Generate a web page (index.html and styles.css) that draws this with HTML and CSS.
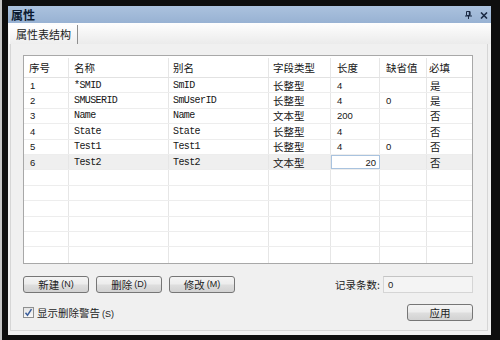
FILE: index.html
```html
<!DOCTYPE html>
<html>
<head>
<meta charset="utf-8">
<link rel="stylesheet" href="styles.css">
</head>
<body>
<div class="frame">
  <div class="win">
    <div class="titlebar">
      <span class="title">属性</span>
      <span class="tbtns">
        <svg class="pin" width="7" height="8" viewBox="0 0 7 8"><path d="M1.5 0.5h3.5v4h-3.5z" fill="none" stroke="#1b2a44"/><path d="M4.5 0.5v4" stroke="#1b2a44" stroke-width="1.4"/><path d="M0 5h7" stroke="#1b2a44"/><path d="M3.5 5v3" stroke="#1b2a44"/></svg>
        <svg class="close" width="8" height="7" viewBox="0 0 8 7"><path d="M1 0.5l6 6M7 0.5l-6 6" stroke="#1b2a44" stroke-width="1.6"/></svg>
      </span>
    </div>
    <div class="tabstrip"><div class="tab">属性表结构</div></div>
    <div class="panel">
      <div class="grid">
        <div class="row head"><span>序号</span><span>名称</span><span>别名</span><span>字段类型</span><span>长度</span><span>缺省值</span><span>必填</span></div>
        <div class="row"><span class="num">1</span><span class="mono">*SMID</span><span class="mono">SmID</span><span>长整型</span><span class="num">4</span><span class="num"></span><span>是</span></div>
        <div class="row"><span class="num">2</span><span class="mono">SMUSERID</span><span class="mono">SmUserID</span><span>长整型</span><span class="num">4</span><span class="num">0</span><span>是</span></div>
        <div class="row"><span class="num">3</span><span class="mono">Name</span><span class="mono">Name</span><span>文本型</span><span class="num">200</span><span class="num"></span><span>否</span></div>
        <div class="row"><span class="num">4</span><span class="mono">State</span><span class="mono">State</span><span>长整型</span><span class="num">4</span><span class="num"></span><span>否</span></div>
        <div class="row"><span class="num">5</span><span class="mono">Test1</span><span class="mono">Test1</span><span>长整型</span><span class="num">4</span><span class="num">0</span><span>否</span></div>
        <div class="row sel"><span class="num">6</span><span class="mono">Test2</span><span class="mono">Test2</span><span>文本型</span><span class="num edit">20</span><span class="num"></span><span>否</span></div>
        <div class="row"><span></span><span></span><span></span><span></span><span></span><span></span><span></span></div>
        <div class="row"><span></span><span></span><span></span><span></span><span></span><span></span><span></span></div>
        <div class="row"><span></span><span></span><span></span><span></span><span></span><span></span><span></span></div>
        <div class="row"><span></span><span></span><span></span><span></span><span></span><span></span><span></span></div>
        <div class="row"><span></span><span></span><span></span><span></span><span></span><span></span><span></span></div>
        <div class="row last"><span></span><span></span><span></span><span></span><span></span><span></span><span></span></div>
      </div>
      <div class="actions">
        <button class="btn">新建<span class="acc">(N)</span></button>
        <button class="btn">删除<span class="acc">(D)</span></button>
        <button class="btn">修改<span class="acc">(M)</span></button>
        <div class="count">
          <span class="count-label">记录条数:</span>
          <span class="count-box">0</span>
        </div>
      </div>
      <div class="footer">
        <label class="check">
          <span class="box"><svg width="9" height="9" viewBox="0 0 9 9"><path d="M1.5 4.8l2 2.4l4-6" fill="none" stroke="#3c5f9c" stroke-width="1.5"/></svg></span>
          <span class="check-text">显示删除警告<span class="acc">(S)</span></span>
        </label>
        <button class="btn apply">应用</button>
      </div>
    </div>
  </div>
</div>
</body>
</html>
```
FILE: styles.css
```css
html, body {
  margin: 0;
  padding: 0;
}
body {
  width: 500px;
  height: 340px;
  overflow: hidden;
  font-family: "Noto Sans CJK SC", "Liberation Sans", sans-serif;
  color: #1c1c1c;
}
.frame {
  box-sizing: border-box;
  width: 500px;
  height: 340px;
  background: #0e0e0e;
  border-left: 2px solid #c4c4c4;
  padding: 6px 9px 5px 6px;
}
.win {
  height: 329px;
  background: #f0f0f0;
  display: flex;
  flex-direction: column;
}
.titlebar {
  height: 17px;
  flex: none;
  background: linear-gradient(#abc2de, #98b2d3);
  display: flex;
  align-items: center;
  padding: 0 3px 0 3px;
}
.title {
  font-weight: bold;
  font-size: 12px;
  line-height: 17px;
  color: #0c1a30;
}
.tbtns {
  margin-left: auto;
  display: flex;
  align-items: center;
  gap: 8px;
  padding-top: 1px;
}
.tbtns svg {
  display: block;
}
.tabstrip {
  height: 21px;
  flex: none;
  background: linear-gradient(#fefefe, #ebebeb);
  display: flex;
  align-items: flex-end;
}
.tab {
  box-sizing: border-box;
  height: 19px;
  width: 69px;
  margin-left: 1px;
  border-left: 1px solid #ffffff;
  border-right: 1px solid #8e8e8e;
  background: linear-gradient(#ffffff, #eeeeee);
  font-size: 11px;
  line-height: 19px;
  padding-left: 6px;
  color: #1a1a1a;
}
.panel {
  flex: 1;
  margin: 0 3px 4px 2px;
  border: 1px solid #d6d6d6;
  border-top: none;
  padding: 11px 14px 0 12px;
  display: flex;
  flex-direction: column;
}
.grid {
  width: 450px;
  box-sizing: border-box;
  border: 1px solid #a8a8a8;
  background: #ffffff;
}
.row {
  display: grid;
  grid-template-columns: 45px 100px 100px 62px 49px 47px 45px;
  height: 15.4px;
  box-sizing: border-box;
  border-bottom: 1px solid #ededed;
}
.row.last {
  border-bottom: none;
}
.row.head {
  height: 22px;
  border-bottom: 1px solid #e2e2e2;
  padding-top: 2px;
}
.row > span {
  box-sizing: border-box;
  border-right: 1px solid #e6e6e6;
  display: flex;
  align-items: center;
  font-size: 10.5px;
  white-space: nowrap;
  overflow: hidden;
  color: #161616;
}
.row > span:last-child {
  border-right: none;
}
.row > span:nth-child(1) { padding-left: 6px; }
.row > span:nth-child(2) { padding-left: 5px; }
.row > span:nth-child(3) { padding-left: 4px; }
.row > span:nth-child(4) { padding-left: 4px; }
.row > span:nth-child(5) { padding-left: 6px; }
.row > span:nth-child(6) { padding-left: 6px; }
.row > span:nth-child(7) { padding-left: 3px; }
.row.head > span:nth-child(1) { padding-left: 5px; }
.row.head > span:nth-child(7) { padding-left: 2px; }
.row.sel {
  background: #efefef;
}
.mono {
  font-family: "Liberation Mono", monospace;
  font-size: 10px !important;
  letter-spacing: -0.6px;
}
.num {
  font-family: "Liberation Sans", sans-serif;
  font-size: 9.5px !important;
}
.row > span.edit {
  background: #ffffff;
  border: 1px solid #a9c3df;
  justify-content: flex-end;
  padding: 0 3px 0 0;
}
.actions {
  margin-top: 12px;
  display: flex;
  align-items: center;
  gap: 7px;
  width: 450px;
}
.btn {
  box-sizing: border-box;
  width: 66px;
  height: 17px;
  margin: 0;
  padding: 0;
  border: 1px solid #767676;
  border-radius: 3px;
  background: linear-gradient(#f4f4f4 0%, #ececec 48%, #dedede 52%, #d2d2d2 100%);
  font-family: "Noto Sans CJK SC", sans-serif;
  font-size: 10.5px;
  line-height: 15px;
  color: #1c1c1c;
  display: flex;
  align-items: center;
  justify-content: center;
}
.acc {
  font-family: "Liberation Sans", sans-serif;
  font-size: 9px;
  margin-left: 2px;
}
.count {
  margin-left: auto;
  display: flex;
  align-items: center;
  gap: 3px;
}
.count-label {
  font-size: 10.5px;
}
.count-box {
  box-sizing: border-box;
  width: 90px;
  height: 17px;
  border: 1px solid #d5d5d5;
  border-top-color: #c4c4c4;
  background: #f4f4f4;
  font-family: "Liberation Sans", sans-serif;
  font-size: 9.5px;
  line-height: 15px;
  padding-left: 4px;
}
.footer {
  margin-top: 11px;
  display: flex;
  align-items: center;
  width: 450px;
}
.check {
  display: flex;
  align-items: center;
  gap: 3px;
  font-size: 10.5px;
}
.box {
  box-sizing: border-box;
  width: 11px;
  height: 11px;
  border: 1px solid #8e8f8f;
  background: linear-gradient(#e4e4e4, #fafafa);
  display: flex;
  align-items: center;
  justify-content: center;
}
.box svg {
  display: block;
}
.apply {
  margin-left: auto;
}
```
